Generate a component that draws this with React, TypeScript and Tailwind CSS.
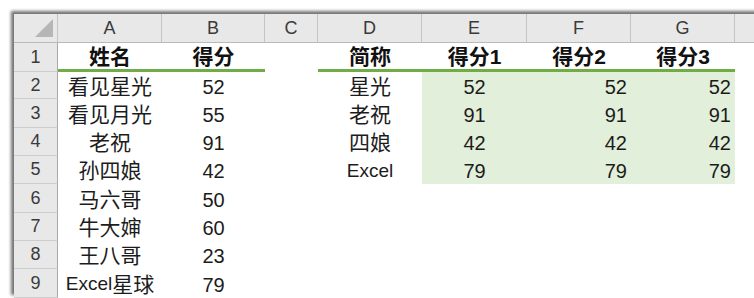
import React from 'react';

type Row = {
  n: number;
  h: string;
  cells: string[];
};

// column widths: A..H
const colW = ['w-[104px]', 'w-[103px]', 'w-[53px]', 'w-[104px]', 'w-[105px]', 'w-[104px]', 'w-[104px]', 'w-[60px]'];
const letters = ['A', 'B', 'C', 'D', 'E', 'F', 'G', ''];

const rows: Row[] = [
  { n: 1, h: 'h-[29px]', cells: ['姓名', '得分', '', '简称', '得分1', '得分2', '得分3'] },
  { n: 2, h: 'h-[27px]', cells: ['看见星光', '52', '', '星光', '52', '52', '52'] },
  { n: 3, h: 'h-[29px]', cells: ['看见月光', '55', '', '老祝', '91', '91', '91'] },
  { n: 4, h: 'h-[28px]', cells: ['老祝', '91', '', '四娘', '42', '42', '42'] },
  { n: 5, h: 'h-[28px]', cells: ['孙四娘', '42', '', 'Excel', '79', '79', '79'] },
  { n: 6, h: 'h-[29px]', cells: ['马六哥', '50'] },
  { n: 7, h: 'h-[28px]', cells: ['牛大婶', '60'] },
  { n: 8, h: 'h-[28px]', cells: ['王八哥', '23'] },
  { n: 9, h: 'h-[29px]', cells: ['Excel星球', '79'] },
];

function CellText({ text }: { text: string }) {
  // Latin runs are set a touch smaller than the CJK glyphs
  const m = text.match(/^([A-Za-z]+)(.*)$/);
  if (m) {
    return (
      <>
        <span className="text-[19px]">{m[1]}</span>
        {m[2] && <span className="text-[21px]">{m[2]}</span>}
      </>
    );
  }
  if (/^\d+$/.test(text)) return <span className="text-[20px]">{text}</span>;
  return <span className="text-[21px]">{text}</span>;
}

function DataRow({ row }: { row: Row }) {
  const head = row.n === 1;
  const filled = row.n >= 2 && row.n <= 5;
  return (
    <div className={`flex ${row.h}`}>
      <div className="w-[44px] shrink-0 flex items-center justify-center bg-[#e8e8e8] border-r border-b border-r-[#a8a8a8] border-b-[#cdcdcd] text-[18px] text-[#3a3a3a]">
        {row.n}
      </div>
      {colW.map((w, i) => {
        const text = row.cells[i] ?? '';
        const underline = head && i !== 2 && i < 7;
        const green = filled && i >= 4 && i <= 6;
        const right = !head && (i === 5 || i === 6);
        return (
          <div
            key={i}
            className={`${w} shrink-0 flex items-center pt-[2px] ${right ? 'justify-end pr-[4px]' : 'justify-center'} ${
              underline ? 'border-b-[3px] border-[#70ad47]' : ''
            } ${green ? 'bg-[#e2efda]' : ''} ${head ? 'font-bold text-[#111]' : 'text-[#1c1c1c]'}`}
          >
            {text && <CellText text={text} />}
          </div>
        );
      })}
    </div>
  );
}

export default function App() {
  return (
    <div className="w-[754px] h-[298px] overflow-hidden bg-white pl-[14px] pt-[14px] font-['Liberation_Sans','Noto_Sans_CJK_SC',sans-serif]">
      <div className="w-[800px] bg-white shadow-[-3px_-3px_3px_rgba(0,0,0,0.55)]">
        {/* column headers */}
        <div className="flex h-[29px] bg-[#e8e8e8] border-b border-[#b9b9b9]">
          <div className="w-[44px] shrink-0 border-r border-[#c4c4c4] relative">
            <svg className="absolute inset-0" width="44" height="28" viewBox="0 0 44 28">
              <polygon points="39,5 39,23 21,23" fill="#b6b6b6" />
            </svg>
          </div>
          {colW.map((w, i) => (
            <div
              key={i}
              className={`${w} shrink-0 flex items-center justify-center border-r border-[#c4c4c4] text-[18px] text-[#3a3a3a]`}
            >
              {letters[i]}
            </div>
          ))}
        </div>
        {rows.map((r) => (
          <DataRow key={r.n} row={r} />
        ))}
      </div>
    </div>
  );
}
